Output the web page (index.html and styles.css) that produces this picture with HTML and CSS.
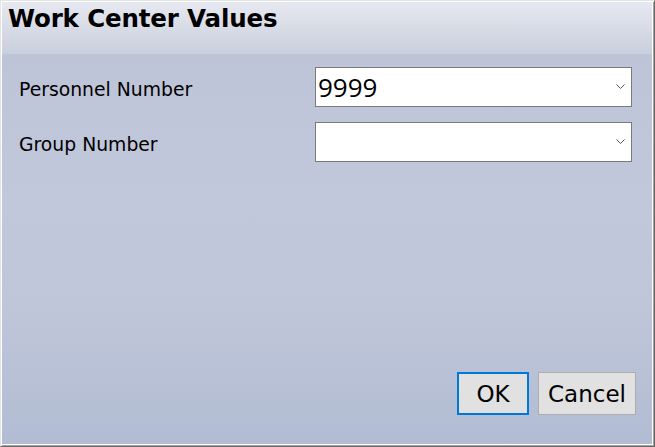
FILE: index.html
```html
<!DOCTYPE html>
<html>
<head>
<meta charset="utf-8">
<link rel="stylesheet" href="styles.css">
</head>
<body>
<div class="window">
  <div class="titlebar">Work Center Values</div>
  <div class="content">
    <div class="form">
      <div class="row">
        <span class="label">Personnel Number</span>
        <div class="combo">
          <span class="value">9999</span>
          <svg class="chev" width="9" height="6" viewBox="0 0 9 6"><path d="M0.5 0.5 L4.5 4.5 L8.5 0.5" fill="none" stroke="#555" stroke-width="1"/></svg>
        </div>
      </div>
      <div class="row">
        <span class="label">Group Number</span>
        <div class="combo">
          <span class="value"></span>
          <svg class="chev" width="9" height="6" viewBox="0 0 9 6"><path d="M0.5 0.5 L4.5 4.5 L8.5 0.5" fill="none" stroke="#555" stroke-width="1"/></svg>
        </div>
      </div>
    </div>
    <div class="buttons">
      <div class="btn ok">OK</div>
      <div class="btn cancel">Cancel</div>
    </div>
  </div>
</div>
</body>
</html>
```

FILE: styles.css
```css
html, body {
  margin: 0;
  padding: 0;
  width: 655px;
  height: 447px;
  overflow: hidden;
}
.window {
  box-sizing: border-box;
  width: 655px;
  height: 447px;
  border-style: solid;
  border-width: 1px;
  border-color: #e3e3e3 #696969 #696969 #e3e3e3;
  box-shadow: inset 1px 1px 0 #ffffff, inset -1px -1px 0 #a0a0a0, inset -2px -2px 0 #ffffff;
  background: linear-gradient(to bottom, #bcc3d7 0px, #c2c8db 200px, #c0c6da 300px, #b1bcd2 447px);
  display: flex;
  flex-direction: column;
  font-family: "DejaVu Sans", sans-serif;
  padding: 1px 2px 2px 1px;
}
.titlebar {
  height: 52px;
  box-sizing: border-box;
  background: linear-gradient(to bottom, #e6e9f0 0%, #d8dce6 50%, #c9cfdd 100%);
  font-family: "DejaVu Sans", sans-serif;
  font-weight: bold;
  font-size: 24.5px;
  color: #000;
  padding: 2px 0 0 6px;
  letter-spacing: -0.15px;
}
.content {
  flex: 1;
  display: flex;
  flex-direction: column;
  justify-content: space-between;
  padding: 13px 16px 29px 17px;
}
.form {
  display: flex;
  flex-direction: column;
  gap: 15px;
  padding-right: 4px;
}
.row {
  display: flex;
  align-items: center;
  justify-content: space-between;
}
.label {
  font-size: 18.8px;
  color: #000;
  padding-top: 4px;
}
.combo {
  box-sizing: border-box;
  width: 317px;
  height: 40px;
  border: 1px solid #7a7a7a;
  background: #fff;
  display: flex;
  align-items: center;
  justify-content: space-between;
  padding: 0 6px 0 2px;
}
.value {
  font-family: "Open Sans", "Noto Sans", sans-serif;
  font-size: 26px;
  color: #000;
  line-height: 1;
}
.chev {
  display: block;
}
.buttons {
  display: flex;
  justify-content: flex-end;
  gap: 9px;
}
.btn {
  box-sizing: border-box;
  height: 43px;
  background: #e1e1e1;
  display: flex;
  align-items: center;
  justify-content: center;
  font-size: 23px;
  color: #000;
}
.ok {
  width: 72px;
  border: 2px solid #0078d7;
}
.cancel {
  width: 98px;
  border: 1px solid #adadad;
}
```
